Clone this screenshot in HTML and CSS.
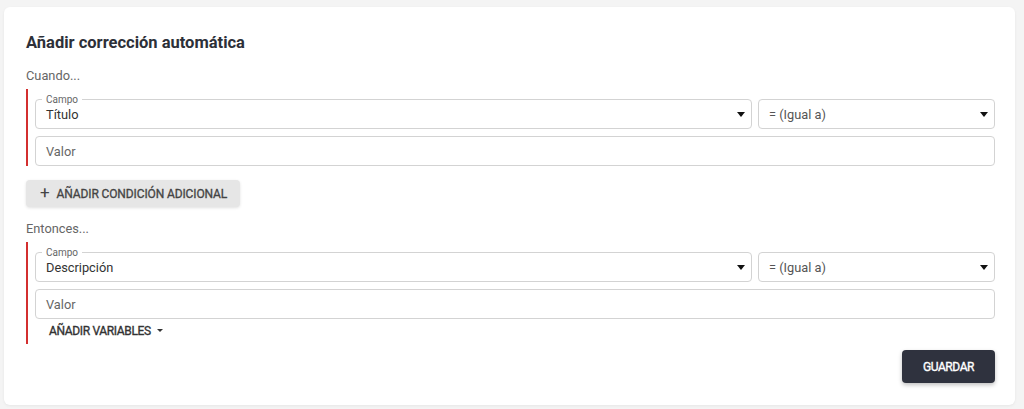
FILE: index.html
```html
<!DOCTYPE html>
<html lang="es">
<head>
<meta charset="utf-8">
<link rel="stylesheet" href="styles.css">
</head>
<body>
<div class="card">
  <h2 class="title">Añadir corrección automática</h2>
  <div class="section-label">Cuando...</div>
  <div class="group">
    <div class="row">
      <div class="field select wide">
        <span class="legend">Campo</span>
        <span class="value">Título</span>
        <span class="caret"></span>
      </div>
      <div class="field select narrow">
        <span class="value muted">= (Igual a)</span>
        <span class="caret"></span>
      </div>
    </div>
    <div class="field input">
      <span class="placeholder">Valor</span>
    </div>
  </div>
  <button class="btn-add" type="button"><span class="plus">+</span>AÑADIR CONDICIÓN ADICIONAL</button>
  <div class="section-label second">Entonces...</div>
  <div class="group">
    <div class="row">
      <div class="field select wide">
        <span class="legend">Campo</span>
        <span class="value">Descripción</span>
        <span class="caret"></span>
      </div>
      <div class="field select narrow">
        <span class="value muted">= (Igual a)</span>
        <span class="caret"></span>
      </div>
    </div>
    <div class="field input">
      <span class="placeholder">Valor</span>
    </div>
    <div class="vars">AÑADIR VARIABLES <span class="caret small"></span></div>
  </div>
  <div class="actions">
    <button class="btn-save" type="button">GUARDAR</button>
  </div>
</div>
</body>
</html>
```
FILE: styles.css
```css
* { box-sizing: border-box; }
html, body { margin: 0; }
body {
  background: #f4f4f4;
  padding: 7px 9px 4px 4px;
  font-family: Roboto, "Liberation Sans", sans-serif;
  height: 409px;
}
.card {
  background: #fff;
  border-radius: 6px;
  box-shadow: 0 1px 3px rgba(0,0,0,0.06);
  padding: 25px 20px 21px 22px;
  height: 398px;
}
.title {
  margin: 0;
  font-size: 16.5px;
  font-weight: 700;
  line-height: 22px;
  color: #2d3038;
}
.section-label {
  margin-top: 13px;
  font-size: 12.8px;
  line-height: 18px;
  color: #666;
}
.section-label.second { margin-top: 13px; }
.group {
  border-left: 2px solid #d32f2f;
  margin-top: 4px;
  padding: 10px 0 0 7px;
  display: flex;
  flex-direction: column;
  gap: 7px;
}
.row {
  display: flex;
  gap: 6px;
}
.field {
  position: relative;
  height: 30px;
  border: 1px solid #d3d3d3;
  border-radius: 4px;
  display: flex;
  align-items: center;
  padding: 0 10px;
  font-size: 12.8px;
  color: #333;
}
.select.wide { flex: 1; }
.select.narrow { width: 237px; }
.field .value { flex: 1; padding-top: 1px; }
.field .value.muted { color: #555; }
.legend {
  position: absolute;
  top: -6px;
  left: 6px;
  padding: 0 4px;
  background: #fff;
  font-size: 10px;
  line-height: 11px;
  color: #666;
}
.caret {
  width: 0;
  height: 0;
  border-left: 4px solid transparent;
  border-right: 4px solid transparent;
  border-top: 5px solid #111;
  margin-right: -4px;
}
.caret.small {
  display: inline-block;
  border-left-width: 3px;
  border-right-width: 3px;
  border-top-width: 3px;
  border-top-color: #333;
  vertical-align: middle;
  margin: 0 0 2px 4px;
}
.placeholder { color: #666; padding-top: 1px; }
.vars {
  font-size: 12px;
  font-weight: 400;
  -webkit-text-stroke: 0.35px #333;
  color: #333;
  letter-spacing: -0.35px;
  padding: 0 0 5px 14px;
  line-height: 16px;
  margin-top: -3px;
}
.btn-add {
  margin-top: 14px;
  display: flex;
  align-items: center;
  height: 27px;
  width: 214px;
  padding: 0 0 0 14px;
  border: none;
  border-radius: 4px;
  background: #e6e6e6;
  box-shadow: 0 1px 3px rgba(0,0,0,0.12);
  font-family: Roboto, "Liberation Sans", sans-serif;
  font-size: 12px;
  font-weight: 400;
  -webkit-text-stroke: 0.3px #444;
  color: #444;
  letter-spacing: -0.12px;
}
.plus {
  font-size: 17px;
  font-weight: 400;
  -webkit-text-stroke: 0;
  margin-right: 7px;
  line-height: 1;
  margin-top: -2px;
}
.actions {
  display: flex;
  justify-content: flex-end;
  margin-top: 6px;
}
.btn-save {
  width: 93px;
  height: 33px;
  border: none;
  border-radius: 4px;
  background: #2f323e;
  color: #fff;
  font-family: Roboto, "Liberation Sans", sans-serif;
  font-size: 12px;
  font-weight: 400;
  letter-spacing: -0.4px;
  -webkit-text-stroke: 0.35px #fff;
  box-shadow: 0 2px 4px rgba(0,0,0,0.25);
}
```
